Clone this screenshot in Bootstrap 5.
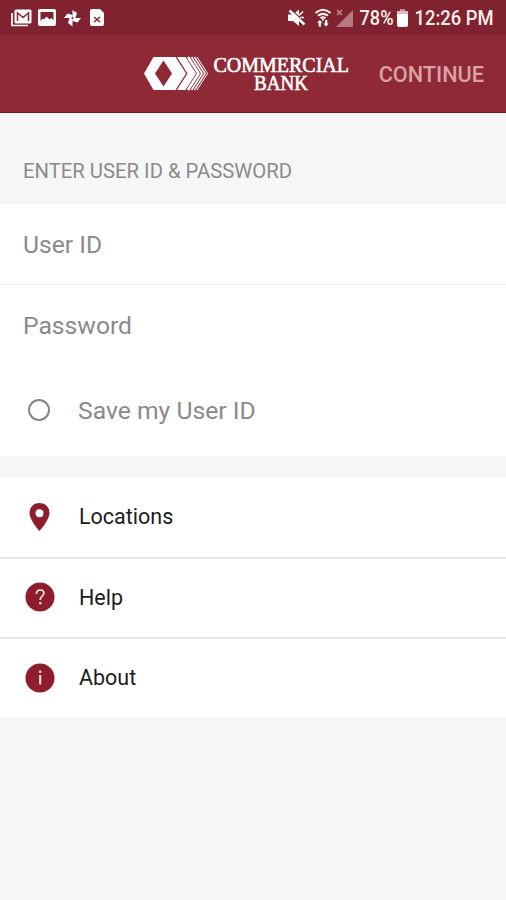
<!DOCTYPE html>
<html lang="en">
<head>
<meta charset="utf-8">
<meta name="viewport" content="width=device-width, initial-scale=1">
<title>Commercial Bank</title>
<link rel="stylesheet" href="https://cdn.jsdelivr.net/npm/bootstrap@5.3.0/dist/css/bootstrap.min.css">
<style>
body{font-family:Roboto,"Liberation Sans",sans-serif;background:#f6f6f6;min-height:900px;overflow-x:hidden}
svg{display:block;flex:none;overflow:visible}
.status-bar{height:35px;background:#812230;padding:0 8px 0 11px}
.status-text text{font-size:20px;font-weight:500;fill:#fdf0ea}
.app-header{height:78px;background:#8f2935;border-bottom:1px solid #741c22;padding:0 22px 0 144px}
.btn-continue{color:#d9a2a4;font-size:21.7px;font-weight:500;line-height:30px;padding-top:2px}
.section-title{height:91px;padding:26px 23px 0;font-size:20.3px;color:#8b8b8b}
.field-row{height:80px;padding:1px 23px 0;color:#8a8a8a;font-size:24.7px;background:#fff}
.field-row.first{height:81px;padding-top:2px;border-bottom:1px solid #f1f1f1}
.save-row{height:91px;padding:0 28px 1px;color:#8a8a8a;background:#fff;font-size:24.7px}
.save-label,.menu-label{padding-top:2px}
.radio-ring{width:22px;height:22px;border:2px solid #858585;border-radius:50%;margin-bottom:1px}
.menu-list{margin-top:22px}
.menu-row{height:81px;background:#fff;border-bottom:2px solid #e6e6e6;padding:0 25px 2px;color:#1c1c1c;font-size:21.5px}
.menu-row.mid{height:80px}
.menu-row.last{height:79px;border-bottom:0}
.menu-icon{width:30px}
</style>
</head>
<body>
<div class="status-bar d-flex align-items-center justify-content-between">
  <div class="d-flex align-items-center gap-2">
    <svg width="20" height="18" viewBox="0 0 20 18"><path d="M1 4v12.500h16" fill="none" stroke="#fff" stroke-width="1.700"/><rect x="3.500" y=".5" width="17" height="14" rx="1.500" fill="#fff"/><path d="M6.500 12V3.800l5.500 4.700 5.500-4.700V12" fill="none" stroke="#812230" stroke-width="1.500"/></svg>
    <svg width="17" height="17" viewBox="0 0 17 17"><rect x="-1" width="18" height="17" rx="2" fill="#fff"/><path d="M1.500 3h13v8.500l-2-2.500-1.800 1.500L7.500 7.500l-2.500 3-1.300-1-2.200 2.500z" fill="#812230"/></svg>
    <svg width="18" height="18" viewBox="0 0 18 18"><g fill="#fff"><path d="M8.500 9V1l4.500 3-1.500 5z"/><path d="M8.500 9h8.500l-3.500 4.500-5-1.500z"/><path d="M8.500 9v8.500L4 14l1.500-5z"/><path d="M8.500 9H0l3.500-4.500 5 1.500z"/></g><circle cx="8.500" cy="9" r="1.100" fill="#812230"/></svg>
    <svg width="15" height="17" viewBox="0 0 15 17"><path d="M2 0h8l4 4v11q0 2-2 2H2q-2 0-2-2V2q0-2 2-2z" fill="#fff"/><path d="M4 8l6 5M10 8l-6 5" stroke="#812230" stroke-width="1.500"/></svg>
  </div>
  <div class="d-flex align-items-center">
    <svg width="18" height="18" viewBox="0 0 18 18"><path d="M0 5.500h5l6-5v16.500l-6-5H0z" fill="#fff"/><path d="M3 .5l14 13" stroke="#812230" stroke-width="1.300"/><path d="M1.500 1.500l15 14" stroke="#fff" stroke-width="2.400"/><path d="M11 6.500l4-4M12 8.500h4" stroke="#fff" stroke-width="1.500"/></svg>
    <svg class="ms-2" width="18" height="19" viewBox="0 0 18 19"><g fill="none" stroke="#fff0ea" stroke-width="2.100"><path d="M1.500 5Q9-1.500 16.500 5M4 7.800q5-4 10 0M6.500 10.300q2.500-2 5 0"/></g><path d="M9 11v1.500" stroke="#fff" stroke-width="2"/><path d="M3 15l2.800-3 2.700 3H7v3.500H4.700V15zM9.500 15.500H11V12h2.300v3.500h1.500L12 18.500z" fill="#fff"/></svg>
    <svg class="ms-1" width="17" height="18" viewBox="0 0 17 18"><path d="M17 1v17H0z" fill="#b57780"/><path d="M1 1l5 5M6 1L1 6" stroke="#c48d94" stroke-width="1.400"/></svg>
    <svg class="status-text" width="44" height="35" viewBox="0 0 44 35"><text x="6.500" y="25.300" textLength="34" lengthAdjust="spacingAndGlyphs">78%</text></svg>
    <svg width="11" height="18" viewBox="0 0 11 18"><path d="M3 0h5v2H3z" fill="#c98f96"/><path d="M0 2h11v4H0z" fill="#dfbcc0"/><path d="M0 5h11v11q0 2-2 2H2q-2 0-2-2z" fill="#fff"/></svg>
    <svg class="status-text" width="90" height="35" viewBox="0 0 90 35"><text x="6.500" y="25.300" textLength="79" lengthAdjust="spacingAndGlyphs">12:26 PM</text></svg>
  </div>
</div>
<header class="app-header d-flex align-items-center justify-content-between">
  <svg width="208" height="44" viewBox="144 52 208 44" role="img" aria-label="Commercial Bank">
    <path fill="#fff" fill-rule="evenodd" d="M153.500 57h22l10.500 16.500L175.500 90h-22L144 73.500zM163.500 60.500l-8.500 13 8.500 13 8.500-13z"/>
    <path fill="#fff" d="M177 57h8.500L196 73.500 185.500 90H177l10.500-16.500z"/>
    <g fill="none" stroke="#fff"><path stroke-width="2.600" d="M188 57l10.500 16.500L188 90"/><path stroke-width="1.700" d="M191.500 57L202 73.500 191.500 90"/><path stroke-width="1.400" d="M194.500 57L205 73.500 194.500 90"/><path stroke-width="1" d="M197 57l10.500 16.500L197 90"/></g>
    <g fill="#fff" stroke="#fff" stroke-width=".6" font-family="'Liberation Serif',serif" font-size="21"><text x="213.500" y="72" textLength="135.500" lengthAdjust="spacingAndGlyphs">COMMERCIAL</text><text x="254" y="89.800" textLength="54" lengthAdjust="spacingAndGlyphs">BANK</text></g>
  </svg>
  <a class="btn-continue text-decoration-none" href="#">CONTINUE</a>
</header>
<main>
  <div class="section-title d-flex align-items-center">ENTER USER ID &amp; PASSWORD</div>
  <div class="field-row first d-flex align-items-center">User ID</div>
  <div class="field-row d-flex align-items-center">Password</div>
  <div class="save-row d-flex align-items-center"><span class="radio-ring me-4"></span><span class="save-label ms-1">Save my User ID</span></div>
  <nav class="menu-list">
    <a class="menu-row d-flex align-items-center text-decoration-none" href="#"><svg class="menu-icon" height="30" viewBox="0 0 30 30"><path fill="#8f1d2d" fill-rule="evenodd" d="M14.500 1C8.500 1 4.500 5.200 4.500 11c0 7 10 18 10 18s10-11 10-18c0-5.800-4-10-10-10zm0 6.200a4 4 0 1 1 0 8 4 4 0 0 1 0-8z"/></svg><span class="menu-label ms-4">Locations</span></a>
    <a class="menu-row mid d-flex align-items-center text-decoration-none" href="#"><svg class="menu-icon" height="30" viewBox="0 0 30 30"><circle cx="15" cy="15" r="14.500" fill="#8f1d2d"/><path d="M11.500 12q0-4 3.700-4 3.600 0 3.600 3.300 0 1.700-2 3.300-1.600 1.300-1.600 3.400" fill="none" stroke="#ffe9e4" stroke-width="1.700"/><circle cx="15.200" cy="21.300" r="1.200" fill="#ffe9e4"/></svg><span class="menu-label ms-4">Help</span></a>
    <a class="menu-row last d-flex align-items-center text-decoration-none" href="#"><svg class="menu-icon" height="30" viewBox="0 0 30 30"><circle cx="15" cy="15" r="14.500" fill="#8f1d2d"/><path d="M15.200 12v9.500" stroke="#ffe9e4" stroke-width="2"/><circle cx="15.200" cy="8.800" r="1.300" fill="#ffe9e4"/></svg><span class="menu-label ms-4">About</span></a>
  </nav>
</main>
<script src="https://cdn.jsdelivr.net/npm/bootstrap@5.3.0/dist/js/bootstrap.bundle.min.js"></script>
</body>
</html>
